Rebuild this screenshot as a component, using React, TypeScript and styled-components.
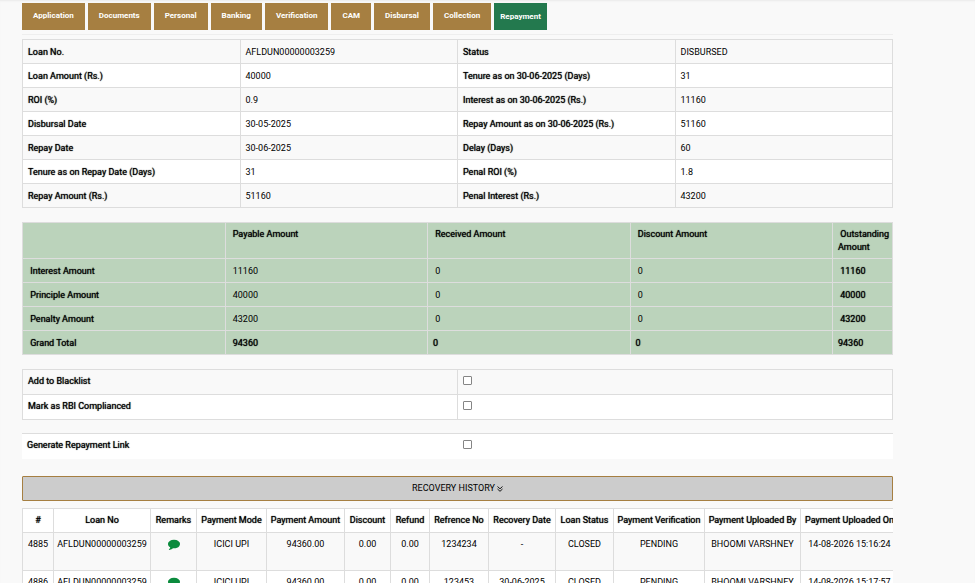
import React from "react";
import styled, { createGlobalStyle, css } from "styled-components";

const GlobalStyle = createGlobalStyle`
  *, *::before, *::after { box-sizing: border-box; }
  body {
    margin: 0;
    background: #f9f9f9;
    color: #000;
    font: 400 9px/13px Roboto, sans-serif;
  }
`;

const Page = styled.main`
  padding: 0 82px 0 22px;
  box-shadow: inset 0 2px 2px -1px #eaeaea;
`;

const Tabs = styled.nav`
  display: flex;
  gap: 3px;
  padding: 3px 0 4px;
  border-bottom: 1px solid #eee;
`;

const Tab = styled.button<{ $active?: boolean }>`
  height: 27px;
  padding: ${(p) => (p.$active ? "0 6px" : "0 11px 2px")};
  border: 0;
  background: ${(p) => (p.$active ? "#23794e" : "#a67f41")};
  color: #fff;
  font: 700 8px/13px Roboto, sans-serif;
  cursor: pointer;
`;

const Table = styled.table`
  width: 100%;
  table-layout: fixed;
  border-collapse: collapse;
  text-align: left;
`;

const Cell = styled.td`
  height: 24px;
  padding: 6px 5px 4px;
  border: 1px solid #ddd;
  vertical-align: top;
`;

const HeadCell = styled(Cell).attrs({ as: "th" })`
  font-weight: 400;
  text-shadow: 0 0 1px currentColor;
`;

const striped = css`
  tr:nth-child(odd) { background: #f9f9f9; }
  tr:nth-child(even) { background: #fff; }
`;

const DetailsTable = styled(Table)`
  margin-top: 4px;
  ${striped}
`;

const SummaryTable = styled(Table)`
  margin-top: 14px;
  background: #bbd3bb;
  thead th { height: 36px; padding: 5px 4px 4px 5px; }
`;

const SummaryCol = styled.col<{ $last?: boolean }>`
  width: ${(p) => (p.$last ? "60px" : "auto")};
`;

const FlagsTable = styled(Table)`
  margin-top: 14px;
  ${striped}
  th, td { height: 25px; padding-top: 5px; }
`;

const LinkTable = styled(Table)`
  margin-top: 13px;
  background: #fff;
  border-top: 1px solid #ddd;
  th, td { height: 25px; padding-top: 5px; border: 0; }
`;

const Checkbox = styled.input.attrs({ type: "checkbox" })`
  appearance: none;
  display: block;
  width: 9px;
  height: 9px;
  margin: 1px 0 0;
  border: 1px solid #858585;
  border-radius: 1px;
  background: #fff;
  &:checked { background: #23794e; }
`;

const HistoryToggle = styled.button`
  display: flex;
  align-items: center;
  justify-content: center;
  gap: 2px;
  width: 100%;
  height: 25px;
  margin: 17px 0 7px;
  padding: 1px 0 0;
  border: 1px solid #a67f41;
  border-radius: 1px;
  background: #ccc;
  color: #000;
  font: 400 9px/13px Roboto, sans-serif;
  cursor: pointer;
`;

const HistoryScroller = styled.section`
  overflow-x: auto;
`;

const HistoryTable = styled(Table)`
  width: 876px;
  text-align: center;
  white-space: nowrap;
  th, td { padding: 5px 0; }
  thead { background: #fff; }
  tbody { ${striped} }
  tbody td { height: 38px; }
`;

const HistoryCol = styled.col<{ $width: number }>`
  width: ${(p) => p.$width}px;
`;

const RemarkButton = styled.button`
  padding: 0;
  border: 0;
  background: none;
  color: #0b8b3d;
  cursor: pointer;
  svg { display: block; width: 12px; height: 12px; }
`;

function CommentIcon() {
  return (
    <svg viewBox="0 0 1792 1792" fill="currentColor" aria-hidden="true">
      <path d="M1792 896q0 174-120 321.5t-326 233-450 85.5q-70 0-145-8-198 175-460 242-49 14-114 22-17 2-30.5-9t-17.5-29v-1q-3-4-.5-12t2-10 4.5-9.5l6-9 7-8.5 8-9q7-8 31-34.5t34.5-38 31-39.5 32.5-51 27-59 26-76q-157-89-247.5-220t-90.5-281q0-130 71-248.5t191-204.5 286-136.5 348-50.5 348 50.5 286 136.5 191 204.5 71 248.5z" />
    </svg>
  );
}

function DoubleDownIcon() {
  return (
    <svg width="6" height="6" viewBox="0 0 6 6" fill="none" stroke="currentColor" strokeWidth="0.9" aria-hidden="true">
      <path d="M0.5 0.5 3 2.8 5.5 0.5M0.5 3 3 5.3 5.5 3" />
    </svg>
  );
}

const tabs = ["Application", "Documents", "Personal", "Banking", "Verification", "CAM", "Disbursal", "Collection", "Repayment"];

const details = [
  ["Loan No.", "AFLDUN00000003259", "Status", "DISBURSED"],
  ["Loan Amount (Rs.)", "40000", "Tenure as on 30-06-2025 (Days)", "31"],
  ["ROI (%)", "0.9", "Interest as on 30-06-2025 (Rs.)", "11160"],
  ["Disbursal Date", "30-05-2025", "Repay Amount as on 30-06-2025 (Rs.)", "51160"],
  ["Repay Date", "30-06-2025", "Delay (Days)", "60"],
  ["Tenure as on Repay Date (Days)", "31", "Penal ROI (%)", "1.8"],
  ["Repay Amount (Rs.)", "51160", "Penal Interest (Rs.)", "43200"],
];

const summary = [
  ["Interest Amount", "11160"],
  ["Principle Amount", "40000"],
  ["Penalty Amount", "43200"],
];

const columns: [string, number][] = [
  ["#", 31],
  ["Loan No", 97],
  ["Remarks", 46],
  ["Payment Mode", 70],
  ["Payment Amount", 78],
  ["Discount", 46],
  ["Refund", 39],
  ["Refrence No", 59],
  ["Recovery Date", 67],
  ["Loan Status", 58],
  ["Payment Verification", 91],
  ["Payment Uploaded By", 96],
  ["Payment Uploaded On", 98],
];

const payments = [
  ["4885", "AFLDUN00000003259", "", "ICICI UPI", "94360.00", "0.00", "0.00", "1234234", "-", "CLOSED", "PENDING", "BHOOMI VARSHNEY", "14-08-2026 15:16:24"],
  ["4886", "AFLDUN00000003259", "", "ICICI UPI", "94360.00", "0.00", "0.00", "123453", "30-06-2025", "CLOSED", "PENDING", "BHOOMI VARSHNEY", "14-08-2026 15:17:57"],
];

const flags = [
  ["blacklist", "Add to Blacklist"],
  ["rbi", "Mark as RBI Complianced"],
];

const NB = "\u00a0";

export default function App() {
  return (
    <>
      <GlobalStyle />
      <Page>
        <Tabs>
          {tabs.map((t) => (
            <Tab key={t} $active={t === "Repayment"}>{t}</Tab>
          ))}
        </Tabs>

        <DetailsTable>
          <tbody>
            {details.map(([a, b, c, d]) => (
              <tr key={a}>
                <HeadCell>{a}</HeadCell>
                <Cell>{b}</Cell>
                <HeadCell>{c}</HeadCell>
                <Cell>{d}</Cell>
              </tr>
            ))}
          </tbody>
        </DetailsTable>

        <SummaryTable>
          <colgroup>
            <SummaryCol />
            <SummaryCol />
            <SummaryCol />
            <SummaryCol />
            <SummaryCol $last />
          </colgroup>
          <thead>
            <tr>
              <HeadCell />
              <HeadCell>{NB}Payable Amount</HeadCell>
              <HeadCell>{NB}Received Amount</HeadCell>
              <HeadCell>{NB}Discount Amount</HeadCell>
              <HeadCell>{NB}Outstanding Amount</HeadCell>
            </tr>
          </thead>
          <tbody>
            {summary.map(([name, amount]) => (
              <tr key={name}>
                <HeadCell>{NB}{name}</HeadCell>
                <Cell>{NB}{amount}</Cell>
                <Cell>{NB}0</Cell>
                <Cell>{NB}0</Cell>
                <HeadCell>{NB}{amount}</HeadCell>
              </tr>
            ))}
            <tr>
              <HeadCell>{NB}Grand Total</HeadCell>
              <HeadCell>{NB}94360</HeadCell>
              <HeadCell>0</HeadCell>
              <HeadCell>0</HeadCell>
              <HeadCell>94360</HeadCell>
            </tr>
          </tbody>
        </SummaryTable>

        <FlagsTable>
          <tbody>
            {flags.map(([id, label]) => (
              <tr key={id}>
                <HeadCell><label htmlFor={id}>{label}</label></HeadCell>
                <Cell><Checkbox id={id} /></Cell>
              </tr>
            ))}
          </tbody>
        </FlagsTable>

        <LinkTable>
          <tbody>
            <tr>
              <HeadCell><label htmlFor="link">Generate Repayment Link</label></HeadCell>
              <Cell><Checkbox id="link" /></Cell>
            </tr>
          </tbody>
        </LinkTable>

        <HistoryToggle>
          RECOVERY HISTORY <DoubleDownIcon />
        </HistoryToggle>

        <HistoryScroller>
          <HistoryTable>
            <colgroup>
              {columns.map(([name, width]) => <HistoryCol key={name} $width={width} />)}
            </colgroup>
            <thead>
              <tr>{columns.map(([name]) => <HeadCell key={name}>{name}</HeadCell>)}</tr>
            </thead>
            <tbody>
              {payments.map((row) => (
                <tr key={row[0]}>
                  {row.map((value, i) => (
                    <Cell key={columns[i][0]}>
                      {i === 2 ? <RemarkButton aria-label="Remarks"><CommentIcon /></RemarkButton> : value}
                    </Cell>
                  ))}
                </tr>
              ))}
            </tbody>
          </HistoryTable>
        </HistoryScroller>
      </Page>
    </>
  );
}
